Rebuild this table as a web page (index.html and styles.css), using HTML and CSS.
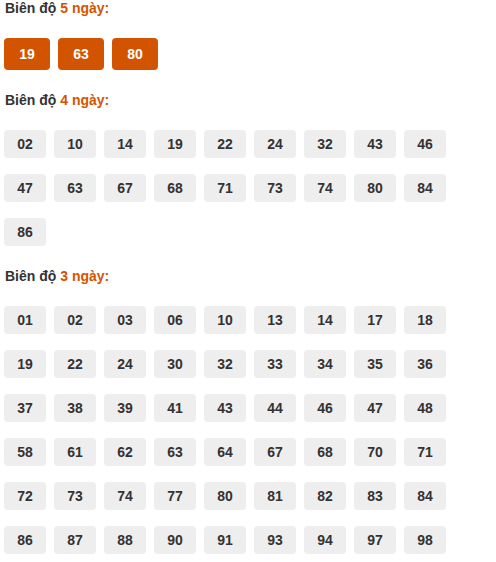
FILE: index.html
```html
<!DOCTYPE html>
<html lang="vi">
<head>
<meta charset="utf-8">
<title>Biên độ</title>
<link rel="stylesheet" href="styles.css">
</head>
<body>
<div class="page">
  <section class="group">
    <h3 class="title">Biên độ <span class="accent">5 ngày:</span></h3>
    <div class="chips">
      <span class="chip chip-hot">19</span>
      <span class="chip chip-hot">63</span>
      <span class="chip chip-hot">80</span>
    </div>
  </section>
  <section class="group">
    <h3 class="title">Biên độ <span class="accent">4 ngày:</span></h3>
    <div class="chips">
      <span class="chip">02</span><span class="chip">10</span><span class="chip">14</span><span class="chip">19</span><span class="chip">22</span><span class="chip">24</span><span class="chip">32</span><span class="chip">43</span><span class="chip">46</span>
      <span class="chip">47</span><span class="chip">63</span><span class="chip">67</span><span class="chip">68</span><span class="chip">71</span><span class="chip">73</span><span class="chip">74</span><span class="chip">80</span><span class="chip">84</span>
      <span class="chip">86</span>
    </div>
  </section>
  <section class="group">
    <h3 class="title">Biên độ <span class="accent">3 ngày:</span></h3>
    <div class="chips">
      <span class="chip">01</span><span class="chip">02</span><span class="chip">03</span><span class="chip">06</span><span class="chip">10</span><span class="chip">13</span><span class="chip">14</span><span class="chip">17</span><span class="chip">18</span>
      <span class="chip">19</span><span class="chip">22</span><span class="chip">24</span><span class="chip">30</span><span class="chip">32</span><span class="chip">33</span><span class="chip">34</span><span class="chip">35</span><span class="chip">36</span>
      <span class="chip">37</span><span class="chip">38</span><span class="chip">39</span><span class="chip">41</span><span class="chip">43</span><span class="chip">44</span><span class="chip">46</span><span class="chip">47</span><span class="chip">48</span>
      <span class="chip">58</span><span class="chip">61</span><span class="chip">62</span><span class="chip">63</span><span class="chip">64</span><span class="chip">67</span><span class="chip">68</span><span class="chip">70</span><span class="chip">71</span>
      <span class="chip">72</span><span class="chip">73</span><span class="chip">74</span><span class="chip">77</span><span class="chip">80</span><span class="chip">81</span><span class="chip">82</span><span class="chip">83</span><span class="chip">84</span>
      <span class="chip">86</span><span class="chip">87</span><span class="chip">88</span><span class="chip">90</span><span class="chip">91</span><span class="chip">93</span><span class="chip">94</span><span class="chip">97</span><span class="chip">98</span>
    </div>
  </section>
</div>
</body>
</html>
```
FILE: styles.css
```css
html, body {
  margin: 0;
  padding: 0;
  background: #ffffff;
}

body {
  font-family: "Liberation Sans", Arial, sans-serif;
  font-size: 14px;
  color: #333333;
}

.page {
  display: flex;
  flex-direction: column;
  gap: 22px;
  padding: 0 4px;
}

.group {
  display: flex;
  flex-direction: column;
  gap: 22px;
}

.title {
  margin: 0;
  padding-left: 1px;
  font-size: 14px;
  line-height: 16px;
  font-weight: bold;
  color: #333333;
}

.accent {
  color: #d35400;
}

.chips {
  display: flex;
  flex-wrap: wrap;
  column-gap: 8px;
  row-gap: 16px;
  width: 450px;
}

.chip {
  display: flex;
  align-items: center;
  justify-content: center;
  width: 42px;
  height: 28px;
  border-radius: 4px;
  background: #eeeeee;
  color: #333333;
  font-weight: bold;
  font-size: 14px;
}

.chip-hot {
  width: 46px;
  height: 32px;
  background: #d35400;
  color: #ffffff;
}
```
